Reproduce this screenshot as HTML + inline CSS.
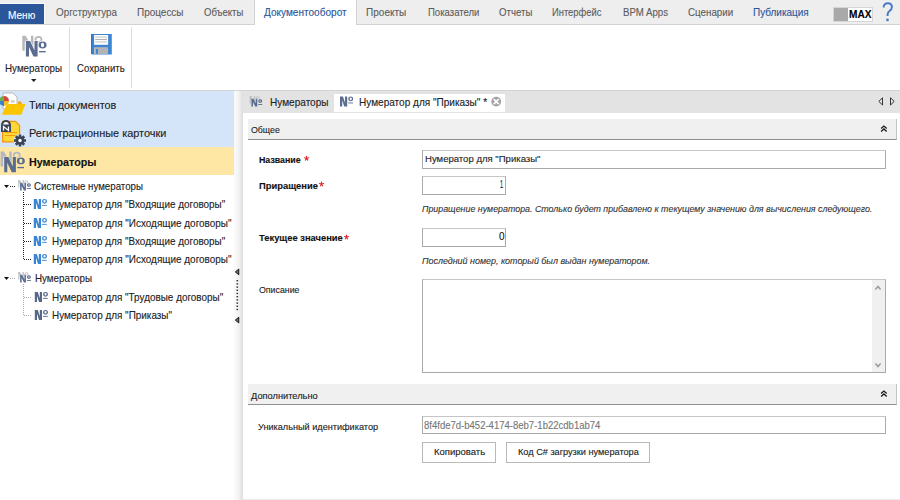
<!DOCTYPE html>
<html><head><meta charset="utf-8"><style>
html,body{margin:0;padding:0;width:900px;height:500px;overflow:hidden;background:#fff;font-family:'Liberation Sans', sans-serif;}
.a{position:absolute;box-sizing:border-box;}
.t{position:absolute;white-space:nowrap;font-family:'Liberation Sans', sans-serif;transform-origin:0 0;-webkit-text-stroke:0.12px currentColor;}
svg{position:absolute;overflow:visible;}
</style></head><body>
<!-- top tab bar -->
<div class="a" style="left:0;top:0;width:900px;height:24px;background:#eeeeee"></div>
<div class="a" style="left:0;top:24px;width:900px;height:1px;background:#d2d2d2"></div>
<div class="a" style="left:0;top:3px;width:45px;height:21px;background:#fafafa"></div>
<div class="a" style="left:0;top:4px;width:44px;height:20px;background:#2b579a"></div>
<div class="a" style="left:254px;top:0;width:103px;height:25px;background:#fff;border-left:1px solid #d2d2d2;border-right:1px solid #d2d2d2"></div>
<!-- MAX -->
<div class="a" style="left:833px;top:7px;width:40px;height:15px;background:#fff;border:1px solid #d6d6d6"></div>
<div class="a" style="left:834px;top:8px;width:14px;height:13px;background:#a9a9a9"></div>

<svg style="left:0;top:0" width="900" height="30"><path d="M883.6 7.6 C883.6 4.6 885.5 3.3 887.8 3.3 C890.3 3.3 891.9 4.9 891.9 7 C891.9 9 890.8 10 889.5 11 C888.2 12 887.6 12.9 887.6 14.6 L887.6 16" fill="none" stroke="#4a7bc4" stroke-width="2"/><circle cx="887.5" cy="19.9" r="1.4" fill="#4a7bc4"/></svg>

<!-- ribbon -->
<div class="a" style="left:0;top:90px;width:900px;height:1px;background:#d4d4d4"></div>
<div class="a" style="left:69px;top:27px;width:1px;height:61px;background:#dcdcdc"></div>
<div class="a" style="left:131px;top:27px;width:1px;height:61px;background:#dcdcdc"></div>

<svg style="left:31px;top:79px" width="6" height="4" viewBox="0 0 6 4"><path d="M0 0 H5.5 L2.75 3 Z" fill="#222"/></svg>
<!-- save icon -->
<svg style="left:0;top:0" width="200" height="60">
  <path d="M91 34 H111.8 V54.6 H92.2 L91 53.4 Z" fill="#3d86d4"/>
  <rect x="91" y="34" width="1.2" height="20" fill="#2f74c0"/>
  <rect x="94.1" y="35" width="14" height="9.8" fill="#fdfdfd"/>
  <rect x="95.2" y="36.4" width="11.8" height="1.4" fill="#d2d2d2"/>
  <rect x="95.2" y="39" width="11.8" height="0.9" fill="#a8a8a8"/>
  <rect x="95.2" y="41.2" width="11.8" height="1.4" fill="#d2d2d2"/>
  <rect x="94.1" y="47.4" width="13.7" height="6.4" fill="#d9c3b4"/>
  <rect x="94.6" y="47.9" width="12.7" height="5.9" fill="#b3b3b3"/>
  <rect x="96" y="49" width="2" height="4.8" fill="#3d86d4"/>
</svg>

<!-- left panel -->
<div class="a" style="left:0;top:91px;width:234px;height:56px;background:#d5e5f9"></div>
<div class="a" style="left:0;top:147px;width:234px;height:28px;background:#fee7a4"></div>
<div class="a" style="left:234px;top:91px;width:9px;height:409px;background:linear-gradient(90deg,#fbfbfb 0%,#f3f3f3 50%,#dddddd 100%)"></div>
<!-- nav icon 1: folder with chart -->
<svg style="left:0;top:92px" width="26" height="24" viewBox="0 0 26 24">
  <path d="M3 1 H13 L17 5 V17 H3 Z" fill="#fff" stroke="#b9b9b9" stroke-width="1"/>
  <path d="M4 4 A5 5 0 0 1 9 9 H4 Z" fill="#d9453a"/>
  <path d="M4 4 A5 5 0 0 0 -1 9 H4 Z" fill="#6ab04c"/>
  <path d="M-1 9 A5 5 0 0 0 4 14 V9 Z" fill="#3d7fd0"/>
  <path d="M4 9 H9 A5 5 0 0 1 4 14 Z" fill="#f2c12e"/>
  <rect x="11" y="8.3" width="3.7" height="2.1" fill="#c8c8c8"/>
  <path d="M18 9.5 H21 L22 11.9 H18 Z" fill="#e8a623"/>
  <path d="M6.9 11.9 H25.5 L21.3 22.7 H1.8 Z" fill="#fbc600"/>
</svg>
<!-- nav icon 2: card with lock + gear -->
<svg style="left:0;top:119px" width="28" height="28" viewBox="0 0 28 28">
  <path d="M2.6 2.3 H15.5 L19.6 6.4 V22.9 H2.6 Z" fill="#fdd835" stroke="#f39412" stroke-width="1.2"/>
  <rect x="5" y="13" width="12" height="1" fill="#f29a12"/>
  <rect x="5" y="16" width="12" height="1" fill="#f29a12"/>
  <path d="M1 13 V6 A5 5 0 0 1 11 6 V13 Z" fill="#3b4454"/>
  <path d="M3.3 5.6 A2.7 2.5 0 0 1 8.7 5.6 Z" fill="#fff"/>
  <path d="M3.5 11.5 V7.5 L8.5 11.5 V7.5" fill="none" stroke="#fff" stroke-width="1.3"/>
  <circle cx="20" cy="21.5" r="6.6" fill="#d5e5f9"/>
  <g transform="translate(20 21.5)" fill="#3b4454">
    <circle r="4.2"/>
    <rect x="-1.3" y="-6" width="2.6" height="12"/>
    <rect x="-1.3" y="-6" width="2.6" height="12" transform="rotate(45)"/>
    <rect x="-1.3" y="-6" width="2.6" height="12" transform="rotate(90)"/>
    <rect x="-1.3" y="-6" width="2.6" height="12" transform="rotate(135)"/>
    <circle r="1.7" fill="#fff"/>
  </g>
</svg>


<!-- tree -->
<div id="tree"></div>
<!-- right panel -->
<div class="a" style="left:243px;top:91px;width:657px;height:22px;background:#e3e3e3"></div>
<div class="a" style="left:334px;top:94px;width:171px;height:18px;background:#fff"></div>
<div class="a" style="left:243px;top:499px;width:657px;height:1px;background:#ececec"></div>

<svg style="left:0;top:0" width="900" height="120"><circle cx="496.2" cy="101.6" r="4.9" fill="#a3a3a3"/><path d="M493.7 99.1 L498.7 104.1 M498.7 99.1 L493.7 104.1" stroke="#fff" stroke-width="1.6"/></svg>
<svg style="left:878px;top:97px" width="18" height="9" viewBox="0 0 18 9">
  <path d="M4.5 0.8 V8 L0.8 4.4 Z" fill="none" stroke="#333" stroke-width="1"/>
  <path d="M12.5 0.8 V8 L16.2 4.4 Z" fill="none" stroke="#333" stroke-width="1"/>
</svg>
<!-- section 1 -->
<div class="a" style="left:248px;top:119px;width:649px;height:21px;background:#f0f0f0;border-right:1px solid #c4c4c4;border-bottom:1px solid #8f8f8f"></div>
<svg style="left:880px;top:125px" width="8" height="7" viewBox="0 0 8 7"><path d="M1.1 3.6 L3.9 1.1 L6.7 3.6 M1.1 6.4 L3.9 3.9 L6.7 6.4" fill="none" stroke="#1a1a1a" stroke-width="1.3"/></svg>
<!-- inputs -->
<div class="a" style="left:422px;top:150px;width:464px;height:19px;border:1px solid #a9a9a9;border-top-color:#c6c6c6;background:#fff"></div>
<div class="a" style="left:422px;top:176px;width:84px;height:19px;border:1px solid #a9a9a9;border-top-color:#c6c6c6;background:#fff"></div>
<div class="a" style="left:422px;top:228px;width:84px;height:19px;border:1px solid #a9a9a9;border-top-color:#c6c6c6;background:#fff"></div>
<div class="a" style="left:422px;top:279px;width:464px;height:94px;border:1px solid #a9a9a9;border-top-color:#c6c6c6;background:#fff"></div>
<div class="a" style="left:872px;top:280px;width:13px;height:92px;background:#f0f0f0"></div>
<svg style="left:874px;top:284px" width="9" height="84" viewBox="0 0 9 84">
  <path d="M1.4 5.6 L4 2.5 L6.6 5.6" fill="none" stroke="#9c9c9c" stroke-width="1.5"/>
  <path d="M1.4 79.4 L4 82.5 L6.6 79.4" fill="none" stroke="#9c9c9c" stroke-width="1.5"/>
</svg>
<!-- section 2 -->
<div class="a" style="left:248px;top:384px;width:649px;height:21px;background:#f0f0f0;border-right:1px solid #c4c4c4;border-bottom:1px solid #8f8f8f"></div>
<svg style="left:880px;top:390px" width="8" height="7" viewBox="0 0 8 7"><path d="M1.1 3.6 L3.9 1.1 L6.7 3.6 M1.1 6.4 L3.9 3.9 L6.7 6.4" fill="none" stroke="#1a1a1a" stroke-width="1.3"/></svg>
<div class="a" style="left:422px;top:416px;width:464px;height:18px;border:1px solid #a9a9a9;border-top-color:#c6c6c6;background:#fff"></div>
<div class="a" style="left:422px;top:442px;width:74px;height:21px;border:1px solid #b9b9b9;background:#fff"></div>
<div class="a" style="left:506px;top:442px;width:144px;height:21px;border:1px solid #b9b9b9;background:#fff"></div>
<!-- splitter -->
<svg style="left:234px;top:268px" width="8" height="56" viewBox="0 0 8 56">
  <path d="M4.8 1 V6.8 L1.3 3.9 Z" fill="#666" stroke="#111" stroke-width="0.9" stroke-linejoin="round"/>
  <path d="M4.8 49.2 V55 L1.3 52.1 Z" fill="#666" stroke="#111" stroke-width="0.9" stroke-linejoin="round"/>
  <g fill="#333"><rect x="2.5" y="12" width="1.6" height="1.4"/><rect x="2.5" y="15.2" width="1.6" height="1.4"/><rect x="2.5" y="18.4" width="1.6" height="1.4"/><rect x="2.5" y="21.6" width="1.6" height="1.4"/><rect x="2.5" y="24.8" width="1.6" height="1.4"/><rect x="2.5" y="28" width="1.6" height="1.4"/><rect x="2.5" y="31.2" width="1.6" height="1.4"/><rect x="2.5" y="34.4" width="1.6" height="1.4"/><rect x="2.5" y="37.6" width="1.6" height="1.4"/><rect x="2.5" y="40.8" width="1.6" height="1.4"/></g>
</svg>

<svg style="left:4px;top:185px" width="6" height="4" viewBox="0 0 6 4"><path d="M0 0 H5 L2.5 3 Z" fill="#111"/></svg>
<div class="a" style="left:10px;top:186px;width:6px;height:1px;background:repeating-linear-gradient(90deg,#222 0 1px,transparent 1px 2px)"></div>
<svg style="left:0;top:0" width="900" height="500"><path d="M18.30 180.10 L19.99 180.10 L22.60 184.75 L22.60 180.10 L23.85 180.10 L23.85 187.60 L22.16 187.60 L19.55 182.95 L19.55 187.60 L18.30 187.60 Z" fill="#bdbdbd"/><ellipse cx="26.40" cy="182.00" rx="1.50" ry="1.35" fill="none" stroke="#bdbdbd" stroke-width="0.90"/><path d="M20.10 182.80 L22.19 182.80 L24.40 187.54 L24.40 182.80 L25.95 182.80 L25.95 190.45 L23.86 190.45 L21.65 185.71 L21.65 190.45 L20.10 190.45 Z" fill="none" stroke="#fff" stroke-width="0.60"/><rect x="26.70" y="183.00" width="4.4" height="4" fill="#fff"/><path d="M20.10 182.80 L22.19 182.80 L24.40 187.54 L24.40 182.80 L25.95 182.80 L25.95 190.45 L23.86 190.45 L21.65 185.71 L21.65 190.45 L20.10 190.45 Z" fill="#5d6e92"/><rect x="27.55" y="183.85" width="2.7" height="2.3" rx="1" fill="none" stroke="#5d6e92" stroke-width="1.15"/><rect x="26.90" y="188.10" width="4" height="0.9" fill="#5d6e92"/></svg>
<div class="a" style="left:23px;top:192px;width:1px;height:68px;background:repeating-linear-gradient(180deg,#222 0 1px,transparent 1px 2px)"></div>
<div class="a" style="left:24px;top:204px;width:8px;height:1px;background:repeating-linear-gradient(90deg,#222 0 1px,transparent 1px 2px)"></div>
<svg style="left:0;top:0" width="900" height="500"><path d="M33.80 198.90 L36.77 198.90 L38.80 205.16 L38.80 198.90 L41.00 198.90 L41.00 209.00 L38.03 209.00 L36.00 202.74 L36.00 209.00 L33.80 209.00 Z" fill="#3a86d2"/><path d="M42.00 201.30 A2.50 2.40 0 1 0 47.00 201.30 A2.50 2.40 0 1 0 42.00 201.30 Z M43.40 201.30 A1.10 1.30 0 1 0 45.60 201.30 A1.10 1.30 0 1 0 43.40 201.30 Z" fill="#3a86d2" fill-rule="evenodd"/><rect x="42.00" y="204.90" width="4.8" height="0.9" fill="#3a86d2"/></svg>
<div class="a" style="left:24px;top:223px;width:8px;height:1px;background:repeating-linear-gradient(90deg,#222 0 1px,transparent 1px 2px)"></div>
<svg style="left:0;top:0" width="900" height="500"><path d="M33.80 217.90 L36.77 217.90 L38.80 224.16 L38.80 217.90 L41.00 217.90 L41.00 228.00 L38.03 228.00 L36.00 221.74 L36.00 228.00 L33.80 228.00 Z" fill="#3a86d2"/><path d="M42.00 220.30 A2.50 2.40 0 1 0 47.00 220.30 A2.50 2.40 0 1 0 42.00 220.30 Z M43.40 220.30 A1.10 1.30 0 1 0 45.60 220.30 A1.10 1.30 0 1 0 43.40 220.30 Z" fill="#3a86d2" fill-rule="evenodd"/><rect x="42.00" y="223.90" width="4.8" height="0.9" fill="#3a86d2"/></svg>
<div class="a" style="left:24px;top:241px;width:8px;height:1px;background:repeating-linear-gradient(90deg,#222 0 1px,transparent 1px 2px)"></div>
<svg style="left:0;top:0" width="900" height="500"><path d="M33.80 235.90 L36.77 235.90 L38.80 242.16 L38.80 235.90 L41.00 235.90 L41.00 246.00 L38.03 246.00 L36.00 239.74 L36.00 246.00 L33.80 246.00 Z" fill="#3a86d2"/><path d="M42.00 238.30 A2.50 2.40 0 1 0 47.00 238.30 A2.50 2.40 0 1 0 42.00 238.30 Z M43.40 238.30 A1.10 1.30 0 1 0 45.60 238.30 A1.10 1.30 0 1 0 43.40 238.30 Z" fill="#3a86d2" fill-rule="evenodd"/><rect x="42.00" y="241.90" width="4.8" height="0.9" fill="#3a86d2"/></svg>
<div class="a" style="left:24px;top:259px;width:8px;height:1px;background:repeating-linear-gradient(90deg,#222 0 1px,transparent 1px 2px)"></div>
<svg style="left:0;top:0" width="900" height="500"><path d="M33.80 253.90 L36.77 253.90 L38.80 260.16 L38.80 253.90 L41.00 253.90 L41.00 264.00 L38.03 264.00 L36.00 257.74 L36.00 264.00 L33.80 264.00 Z" fill="#3a86d2"/><path d="M42.00 256.30 A2.50 2.40 0 1 0 47.00 256.30 A2.50 2.40 0 1 0 42.00 256.30 Z M43.40 256.30 A1.10 1.30 0 1 0 45.60 256.30 A1.10 1.30 0 1 0 43.40 256.30 Z" fill="#3a86d2" fill-rule="evenodd"/><rect x="42.00" y="259.90" width="4.8" height="0.9" fill="#3a86d2"/></svg>
<svg style="left:4px;top:277px" width="6" height="4" viewBox="0 0 6 4"><path d="M0 0 H5 L2.5 3 Z" fill="#111"/></svg>
<div class="a" style="left:10px;top:278px;width:6px;height:1px;background:repeating-linear-gradient(90deg,#aaa 0 1px,transparent 1px 2px)"></div>
<svg style="left:0;top:0" width="900" height="500"><path d="M18.30 272.10 L19.99 272.10 L22.60 276.75 L22.60 272.10 L23.85 272.10 L23.85 279.60 L22.16 279.60 L19.55 274.95 L19.55 279.60 L18.30 279.60 Z" fill="#bdbdbd"/><ellipse cx="26.40" cy="274.00" rx="1.50" ry="1.35" fill="none" stroke="#bdbdbd" stroke-width="0.90"/><path d="M20.10 274.80 L22.19 274.80 L24.40 279.54 L24.40 274.80 L25.95 274.80 L25.95 282.45 L23.86 282.45 L21.65 277.71 L21.65 282.45 L20.10 282.45 Z" fill="none" stroke="#fff" stroke-width="0.60"/><rect x="26.70" y="275.00" width="4.4" height="4" fill="#fff"/><path d="M20.10 274.80 L22.19 274.80 L24.40 279.54 L24.40 274.80 L25.95 274.80 L25.95 282.45 L23.86 282.45 L21.65 277.71 L21.65 282.45 L20.10 282.45 Z" fill="#5d6e92"/><rect x="27.55" y="275.85" width="2.7" height="2.3" rx="1" fill="none" stroke="#5d6e92" stroke-width="1.15"/><rect x="26.90" y="280.10" width="4" height="0.9" fill="#5d6e92"/></svg>
<div class="a" style="left:23px;top:284px;width:1px;height:32px;background:repeating-linear-gradient(180deg,#aaa 0 1px,transparent 1px 2px)"></div>
<div class="a" style="left:24px;top:297px;width:8px;height:1px;background:repeating-linear-gradient(90deg,#aaa 0 1px,transparent 1px 2px)"></div>
<svg style="left:0;top:0" width="900" height="500"><path d="M34.80 291.90 L37.77 291.90 L39.80 298.16 L39.80 291.90 L42.00 291.90 L42.00 302.00 L39.03 302.00 L37.00 295.74 L37.00 302.00 L34.80 302.00 Z" fill="#56678a"/><path d="M43.00 294.30 A2.50 2.40 0 1 0 48.00 294.30 A2.50 2.40 0 1 0 43.00 294.30 Z M44.40 294.30 A1.10 1.30 0 1 0 46.60 294.30 A1.10 1.30 0 1 0 44.40 294.30 Z" fill="#56678a" fill-rule="evenodd"/><rect x="43.00" y="297.90" width="4.8" height="0.9" fill="#56678a"/></svg>
<div class="a" style="left:24px;top:315px;width:8px;height:1px;background:repeating-linear-gradient(90deg,#aaa 0 1px,transparent 1px 2px)"></div>
<svg style="left:0;top:0" width="900" height="500"><path d="M34.80 309.90 L37.77 309.90 L39.80 316.16 L39.80 309.90 L42.00 309.90 L42.00 320.00 L39.03 320.00 L37.00 313.74 L37.00 320.00 L34.80 320.00 Z" fill="#56678a"/><path d="M43.00 312.30 A2.50 2.40 0 1 0 48.00 312.30 A2.50 2.40 0 1 0 43.00 312.30 Z M44.40 312.30 A1.10 1.30 0 1 0 46.60 312.30 A1.10 1.30 0 1 0 44.40 312.30 Z" fill="#56678a" fill-rule="evenodd"/><rect x="43.00" y="315.90" width="4.8" height="0.9" fill="#56678a"/></svg>
<svg style="left:0;top:0" width="900" height="500"><path d="M22.30 35.70 L25.67 35.70 L30.90 45.00 L30.90 35.70 L33.40 35.70 L33.40 50.70 L30.02 50.70 L24.80 41.40 L24.80 50.70 L22.30 50.70 Z" fill="#b9b9b9"/><ellipse cx="38.50" cy="39.50" rx="3.00" ry="2.70" fill="none" stroke="#b9b9b9" stroke-width="1.80"/><path d="M25.90 41.10 L30.09 41.10 L34.50 50.59 L34.50 41.10 L37.60 41.10 L37.60 56.40 L33.41 56.40 L29.00 46.91 L29.00 56.40 L25.90 56.40 Z" fill="none" stroke="#fff" stroke-width="1.20"/><ellipse cx="42.55" cy="44.70" rx="3.10" ry="2.40" fill="none" stroke="#fff" stroke-width="3.40"/><path d="M25.90 41.10 L30.09 41.10 L34.50 50.59 L34.50 41.10 L37.60 41.10 L37.60 56.40 L33.41 56.40 L29.00 46.91 L29.00 56.40 L25.90 56.40 Z" fill="#5a6c90"/><path d="M38.55 45.00 A4.00 3.45 0 1 0 46.55 45.00 A4.00 3.45 0 1 0 38.55 45.00 Z M40.95 45.00 A1.60 2.20 0 1 0 44.15 45.00 A1.60 2.20 0 1 0 40.95 45.00 Z" fill="#5a6c90" fill-rule="evenodd"/><rect x="39.10" y="51.00" width="6.60" height="1.35" fill="#5a6c90"/></svg>
<svg style="left:0;top:0" width="900" height="500"><path d="M0.60 151.60 L3.98 151.60 L9.20 160.90 L9.20 151.60 L11.70 151.60 L11.70 166.60 L8.32 166.60 L3.10 157.30 L3.10 166.60 L0.60 166.60 Z" fill="#b3b7c6"/><ellipse cx="16.80" cy="155.40" rx="3.00" ry="2.70" fill="none" stroke="#b3b7c6" stroke-width="1.80"/><path d="M4.20 157.00 L8.39 157.00 L12.80 166.49 L12.80 157.00 L15.90 157.00 L15.90 172.30 L11.71 172.30 L7.30 162.81 L7.30 172.30 L4.20 172.30 Z" fill="none" stroke="#fee7a4" stroke-width="1.20"/><ellipse cx="20.85" cy="160.60" rx="3.10" ry="2.40" fill="none" stroke="#fee7a4" stroke-width="3.40"/><path d="M4.20 157.00 L8.39 157.00 L12.80 166.49 L12.80 157.00 L15.90 157.00 L15.90 172.30 L11.71 172.30 L7.30 162.81 L7.30 172.30 L4.20 172.30 Z" fill="#5a6c90"/><path d="M16.85 160.90 A4.00 3.45 0 1 0 24.85 160.90 A4.00 3.45 0 1 0 16.85 160.90 Z M19.25 160.90 A1.60 2.20 0 1 0 22.45 160.90 A1.60 2.20 0 1 0 19.25 160.90 Z" fill="#5a6c90" fill-rule="evenodd"/><rect x="17.40" y="166.90" width="6.60" height="1.35" fill="#5a6c90"/></svg>
<svg style="left:0;top:0" width="900" height="500"><path d="M249.60 96.10 L251.29 96.10 L253.90 100.75 L253.90 96.10 L255.15 96.10 L255.15 103.60 L253.46 103.60 L250.85 98.95 L250.85 103.60 L249.60 103.60 Z" fill="#bdbdbd"/><ellipse cx="257.70" cy="98.00" rx="1.50" ry="1.35" fill="none" stroke="#bdbdbd" stroke-width="0.90"/><path d="M251.40 98.80 L253.49 98.80 L255.70 103.54 L255.70 98.80 L257.25 98.80 L257.25 106.45 L255.16 106.45 L252.95 101.71 L252.95 106.45 L251.40 106.45 Z" fill="none" stroke="#e3e3e3" stroke-width="0.60"/><rect x="258.00" y="99.00" width="4.4" height="4" fill="#e3e3e3"/><path d="M251.40 98.80 L253.49 98.80 L255.70 103.54 L255.70 98.80 L257.25 98.80 L257.25 106.45 L255.16 106.45 L252.95 101.71 L252.95 106.45 L251.40 106.45 Z" fill="#5a6c90"/><rect x="258.85" y="99.85" width="2.7" height="2.3" rx="1" fill="none" stroke="#5a6c90" stroke-width="1.15"/><rect x="258.20" y="104.10" width="4" height="0.9" fill="#5a6c90"/></svg>
<svg style="left:0;top:0" width="900" height="500"><path d="M340.00 96.50 L342.97 96.50 L345.00 102.76 L345.00 96.50 L347.20 96.50 L347.20 106.60 L344.23 106.60 L342.20 100.34 L342.20 106.60 L340.00 106.60 Z" fill="#5a6c90"/><path d="M348.20 98.90 A2.50 2.40 0 1 0 353.20 98.90 A2.50 2.40 0 1 0 348.20 98.90 Z M349.60 98.90 A1.10 1.30 0 1 0 351.80 98.90 A1.10 1.30 0 1 0 349.60 98.90 Z" fill="#5a6c90" fill-rule="evenodd"/><rect x="348.20" y="102.50" width="4.8" height="0.9" fill="#5a6c90"/></svg>
<svg style="left:0;top:0" width="900" height="500"><path d="M306.60 158.40 L306.60 156.30 M306.60 158.40 L304.60 157.75 M306.60 158.40 L305.37 160.10 M306.60 158.40 L307.83 160.10 M306.60 158.40 L308.60 157.75 " stroke="#e4262a" stroke-width="1.1" stroke-linecap="round" fill="none"/></svg>
<svg style="left:0;top:0" width="900" height="500"><path d="M321.50 184.10 L321.50 182.00 M321.50 184.10 L319.50 183.45 M321.50 184.10 L320.27 185.80 M321.50 184.10 L322.73 185.80 M321.50 184.10 L323.50 183.45 " stroke="#e4262a" stroke-width="1.1" stroke-linecap="round" fill="none"/></svg>
<svg style="left:0;top:0" width="900" height="500"><path d="M346.50 237.10 L346.50 235.00 M346.50 237.10 L344.50 236.45 M346.50 237.10 L345.27 238.80 M346.50 237.10 L347.73 238.80 M346.50 237.10 L348.50 236.45 " stroke="#e4262a" stroke-width="1.1" stroke-linecap="round" fill="none"/></svg>
<span class="t" style="left:7.50px;top:10px;font-size:11px;line-height:11px;font-weight:normal;font-style:normal;color:#fff;transform:scaleX(0.9159);">Меню</span>
<span class="t" style="left:56.40px;top:7px;font-size:11px;line-height:11px;font-weight:normal;font-style:normal;color:#5c5c5c;transform:scaleX(0.8948);">Оргструктура</span>
<span class="t" style="left:137.40px;top:7px;font-size:11px;line-height:11px;font-weight:normal;font-style:normal;color:#5c5c5c;transform:scaleX(0.9060);">Процессы</span>
<span class="t" style="left:203.60px;top:7px;font-size:11px;line-height:11px;font-weight:normal;font-style:normal;color:#5c5c5c;transform:scaleX(0.8667);">Объекты</span>
<span class="t" style="left:264.40px;top:7px;font-size:11px;line-height:11px;font-weight:normal;font-style:normal;color:#2b579a;transform:scaleX(0.9145);">Документооборот</span>
<span class="t" style="left:366.30px;top:7px;font-size:11px;line-height:11px;font-weight:normal;font-style:normal;color:#5c5c5c;transform:scaleX(0.9133);">Проекты</span>
<span class="t" style="left:427.70px;top:7px;font-size:11px;line-height:11px;font-weight:normal;font-style:normal;color:#5c5c5c;transform:scaleX(0.8684);">Показатели</span>
<span class="t" style="left:498.60px;top:7px;font-size:11px;line-height:11px;font-weight:normal;font-style:normal;color:#5c5c5c;transform:scaleX(0.8763);">Отчеты</span>
<span class="t" style="left:552.40px;top:7px;font-size:11px;line-height:11px;font-weight:normal;font-style:normal;color:#5c5c5c;transform:scaleX(0.8521);">Интерфейс</span>
<span class="t" style="left:622.50px;top:7px;font-size:11px;line-height:11px;font-weight:normal;font-style:normal;color:#5c5c5c;transform:scaleX(0.8768);">BPM Apps</span>
<span class="t" style="left:688.40px;top:7px;font-size:11px;line-height:11px;font-weight:normal;font-style:normal;color:#5c5c5c;transform:scaleX(0.8897);">Сценарии</span>
<span class="t" style="left:752.50px;top:7px;font-size:11px;line-height:11px;font-weight:normal;font-style:normal;color:#2b579a;transform:scaleX(0.9055);">Публикация</span>
<span class="t" style="left:848.70px;top:10px;font-size:10px;line-height:10px;font-weight:bold;font-style:normal;color:#000;transform:scaleX(1.0110);">MAX</span>
<span class="t" style="left:5.40px;top:63px;font-size:11px;line-height:11px;font-weight:normal;font-style:normal;color:#222;transform:scaleX(0.8917);">Нумераторы</span>
<span class="t" style="left:76.50px;top:63px;font-size:11px;line-height:11px;font-weight:normal;font-style:normal;color:#222;transform:scaleX(0.8720);">Сохранить</span>
<span class="t" style="left:29.40px;top:100px;font-size:11px;line-height:11px;font-weight:normal;font-style:normal;color:#222;transform:scaleX(0.9827);">Типы документов</span>
<span class="t" style="left:29.40px;top:128px;font-size:11px;line-height:11px;font-weight:normal;font-style:normal;color:#222;transform:scaleX(0.9944);">Регистрационные карточки</span>
<span class="t" style="left:29.40px;top:157px;font-size:11px;line-height:11px;font-weight:bold;font-style:normal;color:#111;transform:scaleX(0.9769);">Нумераторы</span>
<span class="t" style="left:34.20px;top:181px;font-size:11px;line-height:11px;font-weight:normal;font-style:normal;color:#222;transform:scaleX(0.8818);">Системные нумераторы</span>
<span class="t" style="left:51.50px;top:199px;font-size:11px;line-height:11px;font-weight:normal;font-style:normal;color:#222;transform:scaleX(0.9005);">Нумератор для &quot;Входящие договоры&quot;</span>
<span class="t" style="left:51.50px;top:218px;font-size:11px;line-height:11px;font-weight:normal;font-style:normal;color:#222;transform:scaleX(0.9041);">Нумератор для &quot;Исходящие договоры&quot;</span>
<span class="t" style="left:51.50px;top:236px;font-size:11px;line-height:11px;font-weight:normal;font-style:normal;color:#222;transform:scaleX(0.9005);">Нумератор для &quot;Входящие договоры&quot;</span>
<span class="t" style="left:51.50px;top:254px;font-size:11px;line-height:11px;font-weight:normal;font-style:normal;color:#222;transform:scaleX(0.9041);">Нумератор для &quot;Исходящие договоры&quot;</span>
<span class="t" style="left:35.40px;top:273px;font-size:11px;line-height:11px;font-weight:normal;font-style:normal;color:#222;transform:scaleX(0.8902);">Нумераторы</span>
<span class="t" style="left:52.00px;top:292px;font-size:11px;line-height:11px;font-weight:normal;font-style:normal;color:#222;transform:scaleX(0.9019);">Нумератор для &quot;Трудовые договоры&quot;</span>
<span class="t" style="left:52.00px;top:310px;font-size:11px;line-height:11px;font-weight:normal;font-style:normal;color:#222;transform:scaleX(0.9022);">Нумератор для &quot;Приказы&quot;</span>
<span class="t" style="left:270.00px;top:97px;font-size:10.5px;line-height:10.5px;font-weight:normal;font-style:normal;color:#222;transform:scaleX(0.9572);">Нумераторы</span>
<span class="t" style="left:359.00px;top:97px;font-size:10.5px;line-height:10.5px;font-weight:normal;font-style:normal;color:#222;transform:scaleX(0.9560);">Нумератор для &quot;Приказы&quot; *</span>
<span class="t" style="left:250.50px;top:125px;font-size:9.5px;line-height:9.5px;font-weight:normal;font-style:normal;color:#222;transform:scaleX(0.9246);">Общее</span>
<span class="t" style="left:258.80px;top:155px;font-size:9.5px;line-height:9.5px;font-weight:bold;font-style:normal;color:#111;transform:scaleX(0.9291);">Название</span>
<span class="t" style="left:258.50px;top:181px;font-size:9.5px;line-height:9.5px;font-weight:bold;font-style:normal;color:#111;transform:scaleX(0.9876);">Приращение</span>
<span class="t" style="left:258.50px;top:233px;font-size:9.5px;line-height:9.5px;font-weight:bold;font-style:normal;color:#111;transform:scaleX(0.9852);">Текущее значение</span>
<span class="t" style="left:424.70px;top:154px;font-size:9.5px;line-height:9.5px;font-weight:normal;font-style:normal;color:#222;transform:scaleX(1.0051);">Нумератор для &quot;Приказы&quot;</span>
<span class="t" style="left:500.40px;top:179px;font-size:10.5px;line-height:10.5px;font-weight:normal;font-style:normal;color:#111;transform:scaleX(0.5333);">1</span>
<span class="t" style="left:498.80px;top:231px;font-size:10.5px;line-height:10.5px;font-weight:normal;font-style:normal;color:#111;transform:scaleX(0.9500);">0</span>
<span class="t" style="left:422.00px;top:204px;font-size:9.5px;line-height:9.5px;font-weight:normal;font-style:italic;color:#333;transform:scaleX(0.9323);">Приращение нумератора. Столько будет прибавлено к текущему значению для вычисления следующего.</span>
<span class="t" style="left:422.00px;top:256px;font-size:9.5px;line-height:9.5px;font-weight:normal;font-style:italic;color:#333;transform:scaleX(0.9391);">Последний номер, который был выдан нумератором.</span>
<span class="t" style="left:258.50px;top:285px;font-size:9.5px;line-height:9.5px;font-weight:normal;font-style:normal;color:#222;transform:scaleX(0.9257);">Описание</span>
<span class="t" style="left:250.60px;top:391px;font-size:9.5px;line-height:9.5px;font-weight:normal;font-style:normal;color:#222;transform:scaleX(0.9752);">Дополнительно</span>
<span class="t" style="left:258.00px;top:422px;font-size:9.5px;line-height:9.5px;font-weight:normal;font-style:normal;color:#222;transform:scaleX(0.9626);">Уникальный идентификатор</span>
<span class="t" style="left:424.00px;top:421px;font-size:10px;line-height:10px;font-weight:normal;font-style:normal;color:#777;transform:scaleX(0.9526);">8f4fde7d-b452-4174-8eb7-1b22cdb1ab74</span>
<span class="t" style="left:433.70px;top:448px;font-size:9px;line-height:9px;font-weight:normal;font-style:normal;color:#222;transform:scaleX(1.0539);">Копировать</span>
<span class="t" style="left:517.50px;top:448px;font-size:9px;line-height:9px;font-weight:normal;font-style:normal;color:#222;transform:scaleX(1.0183);">Код C# загрузки нумератора</span>
</body></html>
